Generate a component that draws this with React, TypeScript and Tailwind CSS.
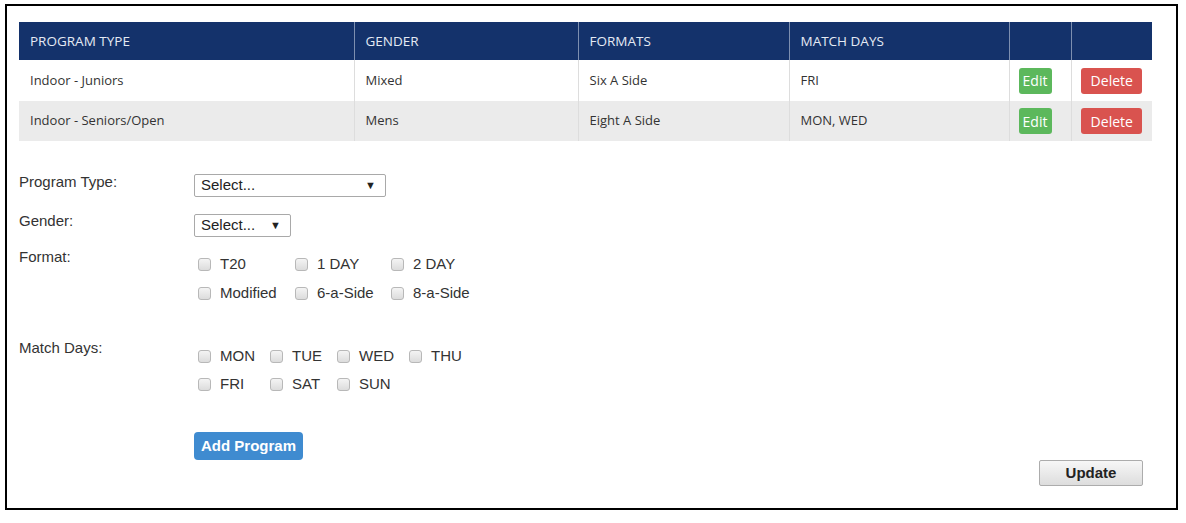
import React from 'react';

const programs = [
  { type: 'Indoor - Juniors', gender: 'Mixed', format: 'Six A Side', days: 'FRI' },
  { type: 'Indoor - Seniors/Open', gender: 'Mens', format: 'Eight A Side', days: 'MON, WED' },
];

const formats = ['T20', '1 DAY', '2 DAY', 'Modified', '6-a-Side', '8-a-Side'];
const days = ['MON', 'TUE', 'WED', 'THU', 'FRI', 'SAT', 'SUN'];

function Checkbox({ label, tall }: { label: string; tall?: boolean }) {
  return (
    <label className={`flex items-center ${tall ? 'h-[29px]' : 'h-[28px]'} whitespace-nowrap`}>
      <span className="w-[13px] h-[13px] rounded-[3px] border border-[#b8b8b8] bg-gradient-to-b from-[#f4f4f4] to-[#dcdcdc] mr-[9px] shrink-0" />
      <span>{label}</span>
    </label>
  );
}

function SelectBox({ width }: { width: string }) {
  return (
    <div className={`${width} h-[23px] border border-[#a9a9a9] rounded-[2px] bg-white flex items-center justify-between pl-[6px] pr-[9px] text-[#222]`}>
      <span>Select...</span>
      <span className="text-[11px]">▼</span>
    </div>
  );
}

function ProgramTable() {
  return (
    <table className="w-[1133px] border-collapse font-['Open_Sans',sans-serif] text-[13px] text-[#333]">
      <thead>
        <tr className="h-[38px] bg-[#14326b] text-[#e4eaf4] text-left text-[13.5px]">
          <th className="w-[335px] font-normal pl-[11px] border-r border-[#7d8fb0]">PROGRAM TYPE</th>
          <th className="w-[224px] font-normal pl-[11px] border-r border-[#7d8fb0]">GENDER</th>
          <th className="w-[211px] font-normal pl-[11px] border-r border-[#7d8fb0]">FORMATS</th>
          <th className="w-[220px] font-normal pl-[11px] border-r border-[#7d8fb0]">MATCH DAYS</th>
          <th className="w-[62px] border-r border-[#7d8fb0]"></th>
          <th className="w-[81px]"></th>
        </tr>
      </thead>
      <tbody>
        {programs.map((p, i) => (
          <tr key={p.type} className={i % 2 === 0 ? 'h-[41px] bg-white' : 'h-[40px] bg-[#ebebeb]'}>
            <td className="pl-[11px] border-r border-[#dddddd]">{p.type}</td>
            <td className="pl-[11px] border-r border-[#dddddd]">{p.gender}</td>
            <td className="pl-[11px] border-r border-[#dddddd]">{p.format}</td>
            <td className="pl-[11px] border-r border-[#dddddd]">{p.days}</td>
            <td className="border-r border-[#dddddd] pl-[9px]">
              <button className="bg-[#5cb85c] text-white rounded-[3px] h-[26px] w-[33px] text-[14px]">Edit</button>
            </td>
            <td className="text-center">
              <button className="bg-[#d9534f] text-white rounded-[3px] h-[26px] w-[61px] text-[14px]">Delete</button>
            </td>
          </tr>
        ))}
      </tbody>
    </table>
  );
}

export default function App() {
  return (
    <div className="w-[1186px] h-[523px] bg-white pt-[4px] pl-[5px]">
      <div className="w-[1173px] h-[506px] border-2 border-black pl-[12px] pt-[16px] flex flex-col font-['Liberation_Sans',Arial,sans-serif] text-[15px] text-[#333]">
        <ProgramTable />

        <div className="mt-[33px] flex">
          <div className="w-[175px] -mt-[3px]">Program Type:</div>
          <SelectBox width="w-[192px]" />
        </div>

        <div className="mt-[17px] flex">
          <div className="w-[175px] -mt-[4px]">Gender:</div>
          <SelectBox width="w-[97px]" />
        </div>

        <div className="mt-[12px] flex">
          <div className="w-[179px] -mt-[3px]">Format:</div>
          <div className="grid grid-cols-[97px_96px_auto] mt-[1px]">
            {formats.map((f) => (
              <Checkbox key={f} label={f} tall />
            ))}
          </div>
        </div>

        <div className="mt-[30px] flex">
          <div className="w-[179px] -mt-[1px]">Match Days:</div>
          <div className="grid grid-cols-[72px_67px_72px_auto] mt-[4px]">
            {days.map((d) => (
              <Checkbox key={d} label={d} />
            ))}
          </div>
        </div>

        <div className="mt-[34px] flex pl-[175px]">
          <button className="h-[28px] px-[7px] bg-[#3f8bd0] text-white font-bold rounded-[4px]">Add Program</button>
        </div>

        <div className="flex justify-end pr-[33px]">
          <button className="w-[104px] h-[26px] border border-[#acacac] rounded-[2px] bg-gradient-to-b from-[#f7f7f7] to-[#dddddd] font-bold text-[#222]">
            Update
          </button>
        </div>
      </div>
    </div>
  );
}
